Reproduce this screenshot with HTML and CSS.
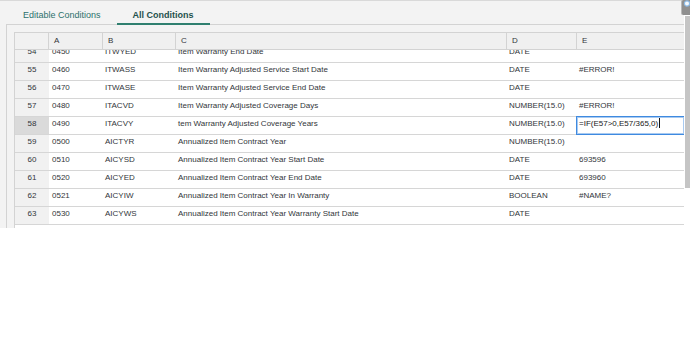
FILE: index.html
```html
<!DOCTYPE html>
<html lang="en">
<head>
  <meta charset="UTF-8">
  <title>All Conditions</title>
  <link rel="stylesheet" href="styles.css">
</head>
<body>
  <div class="app">
    <div class="main">
      <div class="tabs">
        <div class="tab">Editable Conditions</div>
        <div class="tab active">All Conditions</div>
      </div>

      <div class="panel">
        <div class="grid">
          <div class="row head">
            <div class="cell num"></div>
            <div class="cell">A</div>
            <div class="cell">B</div>
            <div class="cell">C</div>
            <div class="cell">D</div>
            <div class="cell">E</div>
          </div>

          <div class="viewport">
            <div class="rows">
              <div class="row"><div class="cell num">54</div><div class="cell">0450</div><div class="cell">ITWYED</div><div class="cell">Item Warranty End Date</div><div class="cell">DATE</div><div class="cell"></div></div>
              <div class="row"><div class="cell num">55</div><div class="cell">0460</div><div class="cell">ITWASS</div><div class="cell">Item Warranty Adjusted Service Start Date</div><div class="cell">DATE</div><div class="cell">#ERROR!</div></div>
              <div class="row"><div class="cell num">56</div><div class="cell">0470</div><div class="cell">ITWASE</div><div class="cell">Item Warranty Adjusted Service End Date</div><div class="cell">DATE</div><div class="cell"></div></div>
              <div class="row"><div class="cell num">57</div><div class="cell">0480</div><div class="cell">ITACVD</div><div class="cell">Item Warranty Adjusted Coverage Days</div><div class="cell">NUMBER(15.0)</div><div class="cell">#ERROR!</div></div>
              <div class="row selected"><div class="cell num">58</div><div class="cell">0490</div><div class="cell">ITACVY</div><div class="cell">tem Warranty Adjusted Coverage Years</div><div class="cell">NUMBER(15.0)</div><div class="cell editing">=IF(E57&gt;0,E57/365,0)<span class="caret"></span></div></div>
              <div class="row"><div class="cell num">59</div><div class="cell">0500</div><div class="cell">AICTYR</div><div class="cell">Annualized Item Contract Year</div><div class="cell">NUMBER(15.0)</div><div class="cell"></div></div>
              <div class="row"><div class="cell num">60</div><div class="cell">0510</div><div class="cell">AICYSD</div><div class="cell">Annualized Item Contract Year Start Date</div><div class="cell">DATE</div><div class="cell">693596</div></div>
              <div class="row"><div class="cell num">61</div><div class="cell">0520</div><div class="cell">AICYED</div><div class="cell">Annualized Item Contract Year End Date</div><div class="cell">DATE</div><div class="cell">693960</div></div>
              <div class="row"><div class="cell num">62</div><div class="cell">0521</div><div class="cell">AICYIW</div><div class="cell">Annualized Item Contract Year In Warranty</div><div class="cell">BOOLEAN</div><div class="cell">#NAME?</div></div>
              <div class="row"><div class="cell num">63</div><div class="cell">0530</div><div class="cell">AICYWS</div><div class="cell">Annualized Item Contract Year Warranty Start Date</div><div class="cell">DATE</div><div class="cell"></div></div>
              <div class="row blank"><div class="cell num"></div><div class="cell"></div><div class="cell"></div><div class="cell"></div><div class="cell"></div><div class="cell"></div></div>
            </div>
          </div>
        </div>
      </div>
    </div>

    <div class="side">
      <div class="corner-btn">
        <svg width="8" height="8" viewBox="0 0 8 8"><circle cx="5" cy="3.5" r="2.6" fill="#f4f8fc" stroke="#8dbbe6" stroke-width="1.2"/></svg>
      </div>
      <div class="thumb"></div>
    </div>
  </div>
</body>
</html>
```

FILE: styles.css
```css
* {
  box-sizing: border-box;
  margin: 0;
  padding: 0;
}

body {
  background: #ffffff;
  font-family: 'Liberation Sans', Arial, sans-serif;
  color: #32363a;
}

.app {
  display: flex;
  width: 690px;
  height: 228px;
  border-top: 1px solid #d9d9d9;
  position: relative;
}

.main {
  width: 684px;
  display: flex;
  flex-direction: column;
  background: #f3f3f3;
}

/* tab strip */
.tabs {
  display: flex;
  height: 24px;
  margin-left: 7px;
  margin-bottom: -1px;
  position: relative;
  z-index: 1;
}

.tab {
  padding: 7px 16px 0;
  line-height: 15px;
  height: 24px;
  font-size: 9px;
  color: #2d716c;
  border-bottom: 2px solid transparent;
}

.tab.active {
  font-weight: bold;
  color: #1f514d;
  border-bottom-color: #2f7f6f;
}

.panel {
  flex: 1;
  margin-left: 6px;
  padding: 7px 0 0 7px;
  border-top: 1px solid #d3d3d3;
  border-left: 1px solid #d3d3d3;
  display: flex;
  min-height: 0;
}

.grid {
  flex: 1;
  display: flex;
  flex-direction: column;
  background: #ffffff;
  border-top: 1px solid #d3d3d3;
  border-left: 1px solid #d3d3d3;
  min-height: 0;
}

.row {
  display: grid;
  grid-template-columns: 34px 54px 73px 331px 70px 107px;
  height: 18px;
  border-bottom: 1px solid #d6d6d6;
  font-size: 8px;
}

.cell {
  padding: 0 2px 3px;
  line-height: 14px;
  white-space: nowrap;
}

.cell:nth-child(2) {
  padding-left: 3px;
}

.cell.num {
  text-align: center;
  background: #f1f1f1;
  padding-left: 0;
  padding-right: 0;
}

.row.selected .cell.num {
  background: #dadada;
}

.row.blank .cell.num {
  background: #ffffff;
}

.cell.editing {
  outline: 1px solid #3f8ae0;
  box-shadow: inset 0 0 0 1px rgba(63, 138, 224, 0.45);
  color: #222;
}

.caret {
  display: inline-block;
  width: 1px;
  height: 10px;
  margin-left: 1px;
  background: #111;
  vertical-align: -2px;
}

/* header row */
.row.head {
  height: 17px;
  background: #f0f0f0;
  border-bottom: 1px solid #d3d3d3;
}

.row.head .cell {
  border-right: 1px solid #d3d3d3;
  padding: 0 0 0 5px;
  line-height: 16px;
}

.row.head .cell:last-child {
  border-right: none;
}

.viewport {
  flex: 1;
  overflow: hidden;
  min-height: 0;
}

.rows {
  margin-top: -5px;
}

/* right scroll strip */
.side {
  width: 6px;
  background: #ffffff;
}

.thumb {
  margin-top: 15px;
  margin-left: 1px;
  height: 172px;
  background: #c5c5c5;
}

.corner-btn {
  position: absolute;
  top: -1px;
  right: 0;
  width: 9px;
  height: 15px;
  background: #8f8f8f;
  border-left: 1px solid #b8b8b8;
  border-radius: 2px 0 0 2px;
  display: flex;
  align-items: flex-start;
  justify-content: flex-end;
}
```
